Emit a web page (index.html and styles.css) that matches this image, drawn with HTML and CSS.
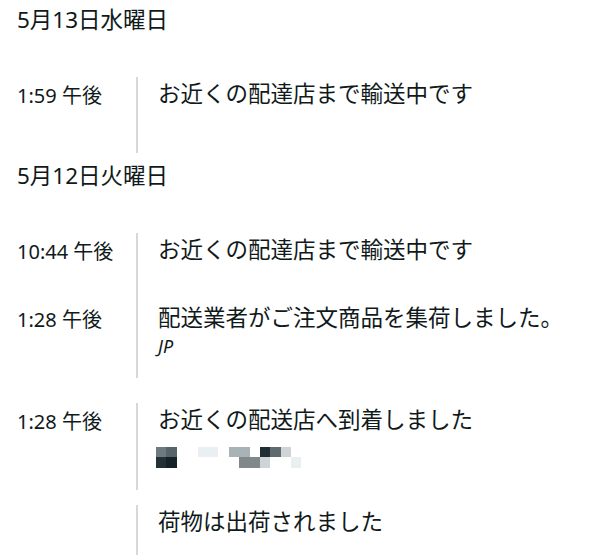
FILE: index.html
```html
<!DOCTYPE html>
<html lang="ja">
<head>
  <meta charset="UTF-8">
  <meta name="viewport" content="width=device-width, initial-scale=1.0">
  <title>配送状況</title>
  <link rel="stylesheet" href="styles.css">
</head>
<body>
  <div class="timeline">

    <!-- 5/13 -->
    <div class="day">
      <h2 class="day-title">5月13日水曜日</h2>
      <div class="event">
        <div class="event-time">1:59 午後</div>
        <div class="event-body">お近くの配達店まで輸送中です</div>
      </div>
    </div>

    <!-- 5/12 -->
    <div class="day">
      <h2 class="day-title">5月12日火曜日</h2>
      <div class="event no-gap">
        <div class="event-time">10:44 午後</div>
        <div class="event-body">お近くの配達店まで輸送中です</div>
      </div>
      <div class="event">
        <div class="event-time">1:28 午後</div>
        <div class="event-body has-note">
          配送業者がご注文商品を集荷しました。
          <div class="event-note">JP</div>
        </div>
      </div>
      <div class="event short-gap">
        <div class="event-time">1:28 午後</div>
        <div class="event-body has-note">
          お近くの配送店へ到着しました
          <div class="mosaic">
            <span class="r1 c1 g1"></span>
            <span class="r1 c2 g2"></span>
            <span class="r1 c5 w2 g7"></span>
            <span class="r1 c8 w2 g4"></span>
            <span class="r1 c11 g8"></span>
            <span class="r1 c12 g3"></span>
            <span class="r1 c13 g6"></span>
            <span class="r2 c1 g9"></span>
            <span class="r2 c2 g10"></span>
            <span class="r2 c9 w2 g5"></span>
            <span class="r2 c11 g6"></span>
            <span class="r2 c14 g7"></span>
          </div>
        </div>
      </div>
      <div class="event">
        <div class="event-time"></div>
        <div class="event-body">荷物は出荷されました</div>
      </div>
    </div>

  </div>
</body>
</html>
```

FILE: styles.css
```css
body {
  margin: 0;
  background-color: #fff;
  color: #111a1a;
  font-family: "Noto Sans", "Noto Sans CJK JP", sans-serif;
}

.timeline {
  padding-top: 5px;
}

.day {
  margin-bottom: 8px;
}

.day-title {
  margin: 0 0 42px 17px;
  font-size: 22.5px;
  line-height: 30px;
  font-weight: 400;
}

.event {
  display: flex;
  margin-bottom: 25px;
}

.event:last-child,
.event.no-gap {
  margin-bottom: 0;
}

.event.short-gap {
  margin-bottom: 15px;
}

.event-time {
  width: 136px;
  flex-shrink: 0;
  box-sizing: border-box;
  padding: 5px 0 0 17px;
  font-size: 20px;
  line-height: 28px;
}

.event-body {
  flex: 1;
  border-left: 2px solid #d5d9d9;
  padding: 3px 0 45px 20px;
  font-size: 22.5px;
  line-height: 28px;
}

.event.no-gap .event-body {
  padding-bottom: 37px;
}

.event-body.has-note {
  padding-bottom: 22px;
}

.event-note {
  font-size: 18px;
  line-height: 20px;
  font-style: italic;
  margin-top: 4px;
}

/* blurred address */
.mosaic {
  display: grid;
  grid-template-columns: repeat(14, 10.4px);
  grid-template-rows: 10px 11px;
  margin: 13px 0 0 -2px;
}

.mosaic .r1 { grid-row: 1; }
.mosaic .r2 { grid-row: 2; }
.mosaic .c1 { grid-column-start: 1; }
.mosaic .c2 { grid-column-start: 2; }
.mosaic .c5 { grid-column-start: 5; }
.mosaic .c8 { grid-column-start: 8; }
.mosaic .c9 { grid-column-start: 9; }
.mosaic .c11 { grid-column-start: 11; }
.mosaic .c12 { grid-column-start: 12; }
.mosaic .c13 { grid-column-start: 13; }
.mosaic .c14 { grid-column-start: 14; }
.mosaic .w2 { grid-column-end: span 2; }

.mosaic .g1 { background-color: #6d7b80; }
.mosaic .g2 { background-color: #56656a; }
.mosaic .g3 { background-color: #5f6b6e; }
.mosaic .g4 { background-color: #a9b3b5; }
.mosaic .g5 { background-color: #80888a; }
.mosaic .g6 { background-color: #cfd5d6; }
.mosaic .g7 { background-color: #eaf0f1; }
.mosaic .g8 { background-color: #1e2e33; }
.mosaic .g9 { background-color: #233136; }
.mosaic .g10 { background-color: #152329; }
```
